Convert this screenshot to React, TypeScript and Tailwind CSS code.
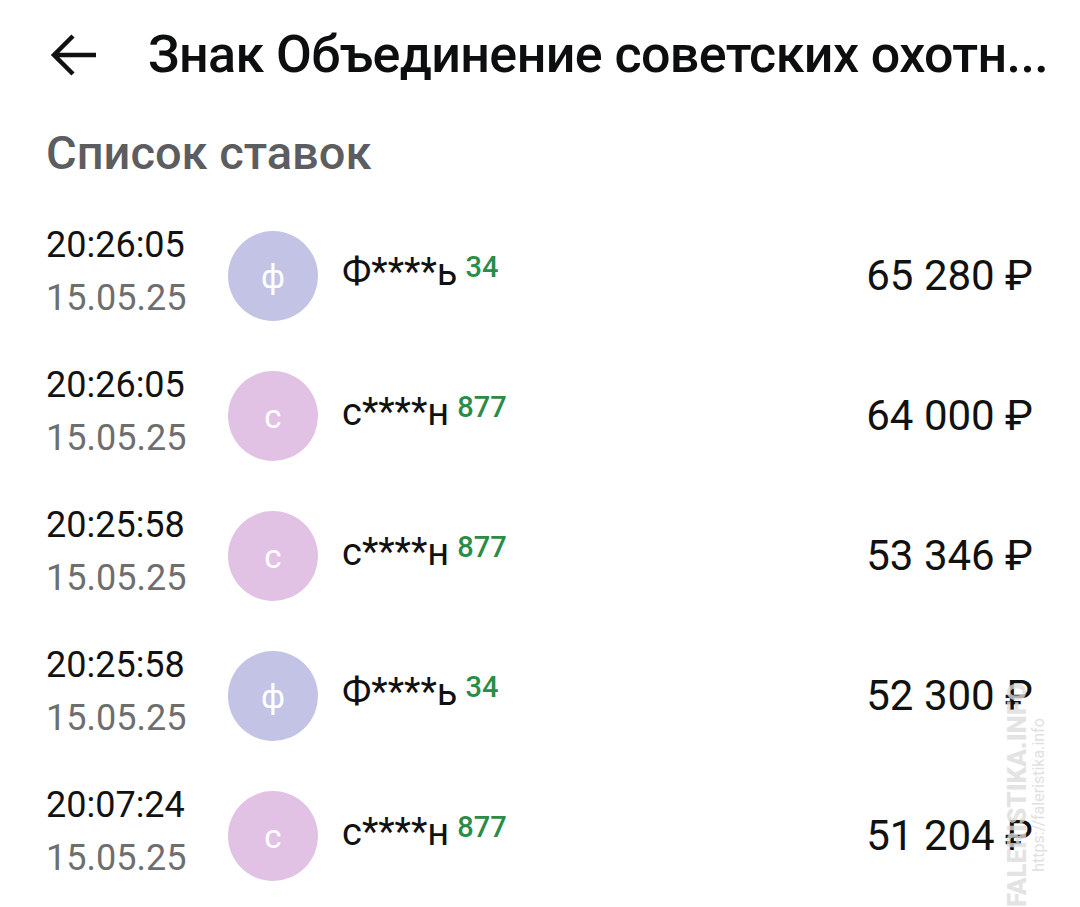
import React from "react";

type Bid = { time: string; date: string; letter: string; name: string; rating: string; amount: string; color: string };

const bids: Bid[] = [
  { time: "20:26:05", date: "15.05.25", letter: "ф", name: "Ф****ь", rating: "34", amount: "65 280 ₽", color: "bg-[#c3c3e6]" },
  { time: "20:26:05", date: "15.05.25", letter: "с", name: "с****н", rating: "877", amount: "64 000 ₽", color: "bg-[#e1c2e4]" },
  { time: "20:25:58", date: "15.05.25", letter: "с", name: "с****н", rating: "877", amount: "53 346 ₽", color: "bg-[#e1c2e4]" },
  { time: "20:25:58", date: "15.05.25", letter: "ф", name: "Ф****ь", rating: "34", amount: "52 300 ₽", color: "bg-[#c3c3e6]" },
  { time: "20:07:24", date: "15.05.25", letter: "с", name: "с****н", rating: "877", amount: "51 204 ₽", color: "bg-[#e1c2e4]" },
];

export default function App() {
  return (
    <div className="relative w-[1080px] h-[907px] overflow-hidden bg-white font-['Roboto',sans-serif]">
      <div className="flex items-center h-[110px] pl-[50px] pr-[30px]">
        <svg width="48" height="44" viewBox="0 0 48 44" className="shrink-0">
          <path d="M46 22H4M23 3L4 22l19 19" fill="none" stroke="#111" strokeWidth="4.5" strokeLinecap="butt" strokeLinejoin="miter" />
        </svg>
        <div className="ml-[50px] text-[52px] font-medium text-[#0d0e10] whitespace-nowrap tracking-[-0.6px]">
          Знак Объединение советских охотн...
        </div>
      </div>
      <div className="pl-[46px] mt-[15px] text-[47px] font-medium text-[#5c5d60] leading-[56px]">Список ставок</div>
      <div className="mt-[25px] flex flex-col">
        {bids.map((b, i) => (
          <div key={i} className="flex items-center h-[140px] pl-[46px] pr-[47px]">
            <div className="w-[182px] flex flex-col leading-[53px] -mt-[8px]">
              <span className="text-[36px] text-[#121212]">{b.time}</span>
              <span className="text-[36px] text-[#6e6e6e]">{b.date}</span>
            </div>
            <div className={`w-[90px] h-[90px] rounded-full ${b.color} flex items-center justify-center shrink-0`}>
              <span className="text-white text-[33px] leading-none">{b.letter}</span>
            </div>
            <div className="ml-[24px] flex items-baseline -mt-[8px]">
              <span className="text-[38px] text-[#111]">{b.name}</span>
              <span className="relative -top-[8px] ml-[8px] text-[29px] font-medium text-[#2a8c47]">{b.rating}</span>
            </div>
            <div className="ml-auto text-[42px] text-[#111] -mt-[2px]">{b.amount}</div>
          </div>
        ))}
      </div>
      <div className="absolute left-[998px] top-[700px] w-[60px] h-[190px] pointer-events-none">
        <div className="absolute left-[30px] top-[95px] -translate-x-1/2 -translate-y-1/2 -rotate-90 whitespace-nowrap flex flex-col items-center leading-[22px]">
          <span className="text-[26px] font-black text-[#dcdcdc]/80 tracking-[0px]">FALERISTIKA.INFO</span>
          <span className="text-[16px] text-[#d8d8d8]/80">https://faleristika.info</span>
        </div>
      </div>
    </div>
  );
}
